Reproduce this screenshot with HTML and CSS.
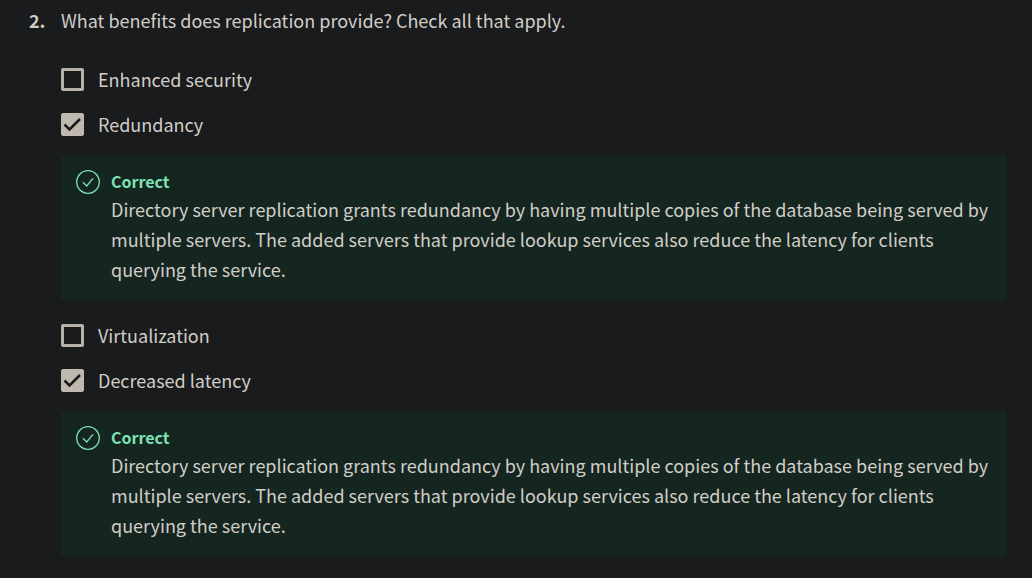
FILE: index.html
```html
<!DOCTYPE html>
<html lang="en">
<head>
<meta charset="utf-8">
<meta name="viewport" content="width=device-width, initial-scale=1">
<title>Quiz question 2</title>
<link rel="stylesheet" href="styles.css">
</head>
<body>
<main class="question">
  <span class="number">2.</span>
  <fieldset class="body">
    <legend class="prompt">What benefits does replication provide? Check all that apply.</legend>
    <label class="option"><input class="box" type="checkbox"><span>Enhanced security</span></label>
    <label class="option"><input class="box" type="checkbox" checked><span>Redundancy</span></label>
    <section class="feedback">
      <svg class="icon" viewBox="0 0 24 24" aria-hidden="true"><circle cx="12" cy="12" r="11.3"/><path d="M7 12.3l3.7 3.7 6.3-7.7"/></svg>
      <div>
        <h2 class="verdict">Correct</h2>
        <p class="reason">Directory server replication grants redundancy by having multiple copies of the database being served by multiple servers. The added servers that provide lookup services also reduce the latency for clients querying the service.</p>
      </div>
    </section>
    <label class="option"><input class="box" type="checkbox"><span>Virtualization</span></label>
    <label class="option"><input class="box" type="checkbox" checked><span>Decreased latency</span></label>
    <section class="feedback">
      <svg class="icon" viewBox="0 0 24 24" aria-hidden="true"><circle cx="12" cy="12" r="11.3"/><path d="M7 12.3l3.7 3.7 6.3-7.7"/></svg>
      <div>
        <h2 class="verdict">Correct</h2>
        <p class="reason">Directory server replication grants redundancy by having multiple copies of the database being served by multiple servers. The added servers that provide lookup services also reduce the latency for clients querying the service.</p>
      </div>
    </section>
  </fieldset>
</main>
</body>
</html>
```

FILE: styles.css
```css
* {
  box-sizing: border-box;
}

body {
  margin: 0;
  background: #1a1b1d;
  color: #d1cdc7;
  font-family: "Noto Sans CJK SC", "Noto Sans", sans-serif;
  font-size: 18px;
  line-height: 30px;
}

.question {
  display: flex;
  padding: 5px 26px 22px 29px;
}

.number {
  flex: 0 0 32px;
  font-weight: 700;
}

.body {
  flex: 1;
  min-width: 0;
  margin: 0;
  padding: 0;
  border: 0;
}

.prompt {
  padding: 0;
  margin-bottom: 22px;
}

.option {
  display: flex;
  align-items: center;
  gap: 14px;
  padding: 7px 0 8px;
}

.box {
  flex: none;
  appearance: none;
  width: 23px;
  height: 23px;
  margin: 0;
  border: 3px solid #b8b2a7;
  border-radius: 2px;
}

.box:checked {
  background: #beb8ae url("data:image/svg+xml,%3Csvg xmlns='http://www.w3.org/2000/svg' viewBox='0 0 19 19'%3E%3Cpath d='M1.5 9.5l5 5L17 4' fill='none' stroke='%23181a1b' stroke-width='2.5'/%3E%3C/svg%3E") center / 19px 19px no-repeat;
  border-width: 1px;
  border-color: #beb8ae;
}

.feedback {
  display: flex;
  gap: 11px;
  margin: 8px 0 13px;
  padding: 14px 15px 16px;
  background: #152620;
}

.feedback:last-child {
  margin-bottom: 0;
}

.icon {
  flex: none;
  width: 24px;
  height: 24px;
  margin-top: 1px;
  fill: none;
  stroke: #7ee2b4;
  stroke-width: 1.3;
}

.verdict {
  margin: 0;
  color: #7ee2b4;
  font-size: 16px;
  line-height: 25px;
}

.reason {
  margin: 0;
}
```
